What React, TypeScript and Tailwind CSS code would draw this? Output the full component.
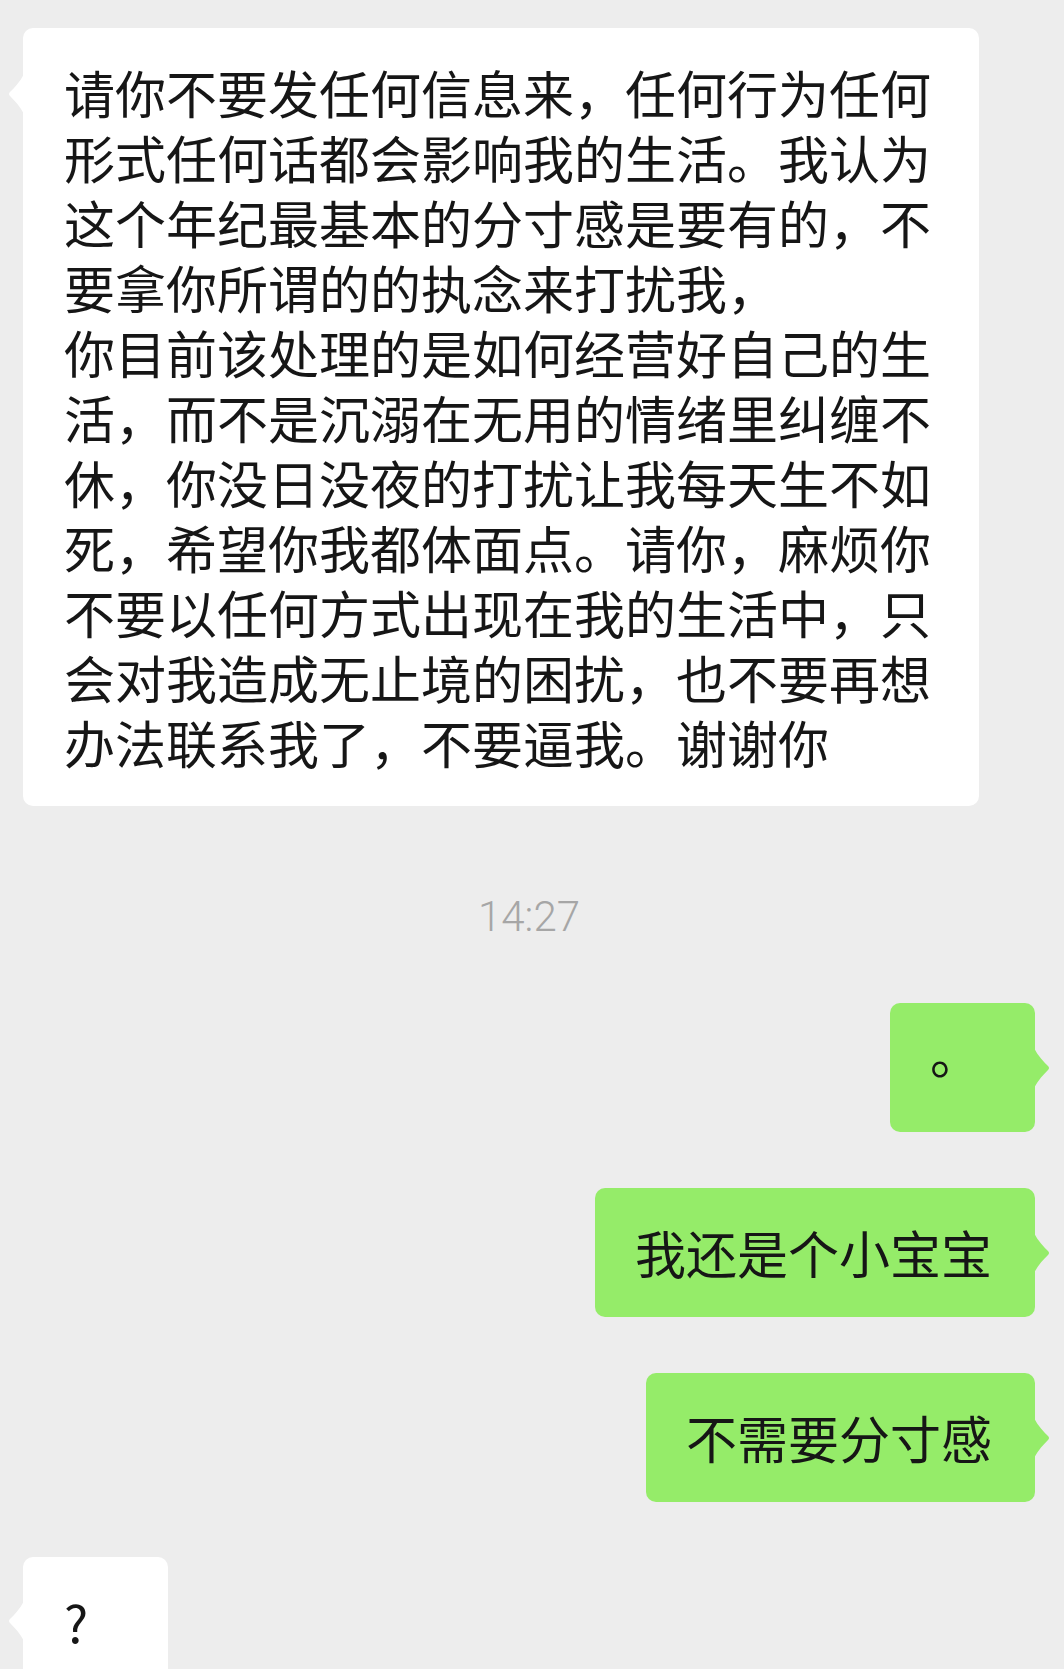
import React from "react";

const message = [
  "请你不要发任何信息来，任何行为任何",
  "形式任何话都会影响我的生活。我认为",
  "这个年纪最基本的分寸感是要有的，不",
  "要拿你所谓的的执念来打扰我，",
  "你目前该处理的是如何经营好自己的生",
  "活，而不是沉溺在无用的情绪里纠缠不",
  "休，你没日没夜的打扰让我每天生不如",
  "死，希望你我都体面点。请你，麻烦你",
  "不要以任何方式出现在我的生活中，只",
  "会对我造成无止境的困扰，也不要再想",
  "办法联系我了，不要逼我。谢谢你",
].join("\n");

const cjk = { fontFamily: '"Noto Sans CJK SC", "Noto Sans", sans-serif' };

function LeftTail({ top }: { top: string }) {
  return (
    <svg className={`absolute left-[-16px] ${top}`} width="17" height="40" viewBox="0 0 17 40">
      <path d="M17 0 C13 8 7 14 3 18 Q1 20 3 22 C7 26 13 32 17 40 Z" fill="#ffffff" />
    </svg>
  );
}

function RightTail() {
  return (
    <svg
      className="absolute right-[-16px] top-1/2 -translate-y-1/2"
      width="17"
      height="40"
      viewBox="0 0 17 40"
    >
      <path d="M0 0 C4 8 10 14 14 18 Q16 20 14 22 C10 26 4 32 0 40 Z" fill="#95ec69" />
    </svg>
  );
}

function Mine({ children }: { children: React.ReactNode }) {
  return (
    <div className="relative min-w-[145px] self-end rounded-[10px] bg-[#95ec69] pl-[40px] pr-[43px] py-[32px] text-[51px] leading-[65px] text-[#161616] whitespace-nowrap">
      {children}
      <RightTail />
    </div>
  );
}

export default function App() {
  return (
    <div
      className="flex h-[1669px] flex-col overflow-hidden bg-[#ededed] pl-[23px] pr-[29px] pt-[28px]"
      style={cjk}
    >
      <div className="relative w-[956px] rounded-[10px] bg-white pl-[41px] pt-[32px] pb-[31px] text-[51px] leading-[65px] text-[#161616] whitespace-pre">
        {message}
        <LeftTail top="top-[46px]" />
      </div>

      <div
        className="mt-[90px] text-center text-[42px] font-light leading-[42px] text-[#a6a6a6]"
        style={{ fontFamily: 'Roboto, "Liberation Sans", sans-serif' }}
      >
        14:27
      </div>

      <div className="mt-[65px] flex flex-col gap-[56px]">
        <Mine>
          <span className="relative -top-[15px]">。</span>
        </Mine>
        <Mine>我还是个小宝宝</Mine>
        <Mine>不需要分寸感</Mine>
      </div>

      <div className="relative mt-[55px] h-[200px] w-[145px] shrink-0 rounded-[10px] bg-white pl-[41px] py-[32px] text-[51px] leading-[65px] text-[#161616]">
        ?
        <LeftTail top="top-[44px]" />
      </div>
    </div>
  );
}
